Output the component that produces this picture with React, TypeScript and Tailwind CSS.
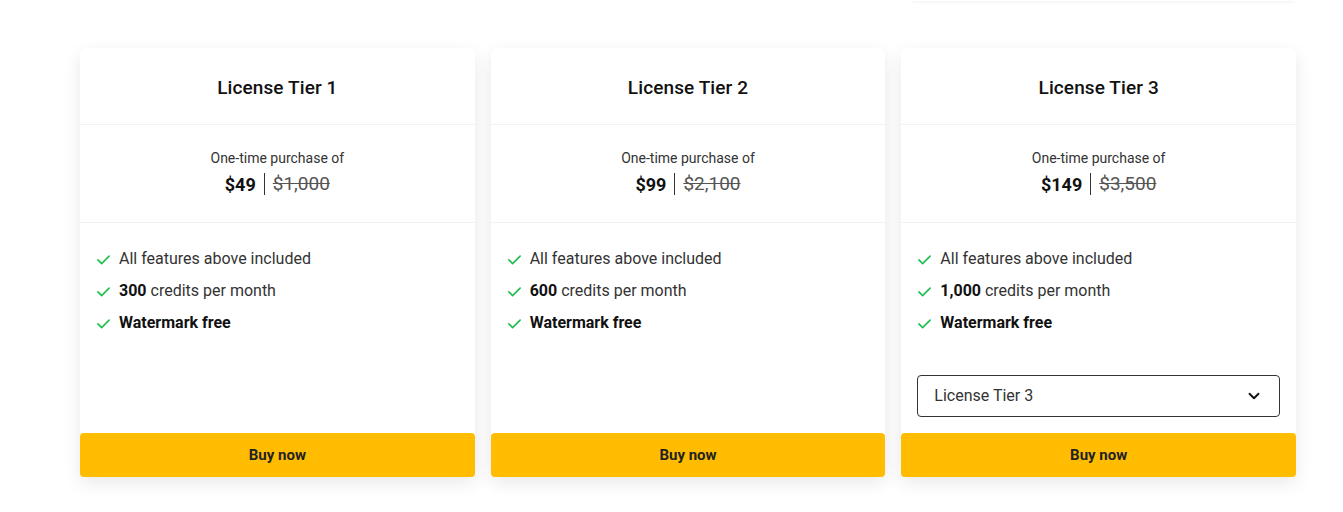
import { ChevronDown } from "lucide-react";

interface Tier {
  name: string;
  price: string;
  was: string;
  credits: string;
  select?: boolean;
}

const tiers: Tier[] = [
  { name: "License Tier 1", price: "$49", was: "$1,000", credits: "300" },
  { name: "License Tier 2", price: "$99", was: "$2,100", credits: "600" },
  { name: "License Tier 3", price: "$149", was: "$3,500", credits: "1,000", select: true },
];

const Check = () => (
  <svg width="15" height="15" viewBox="0 0 24 24" fill="none" stroke="#1fbf4f" strokeWidth="2.6" strokeLinecap="round" strokeLinejoin="round" className="shrink-0">
    <path d="M3 12.5l6 6L21 6.5" />
  </svg>
);

const TierCard = ({ tier }: { tier: Tier }) => (
  <div className="flex flex-col bg-white rounded-md shadow-[0_6px_18px_rgba(0,0,0,0.09)]">
    <div className="h-[77px] flex items-center justify-center border-b border-[#f2f2f2] pt-[4px]">
      <h3 className="text-[19px] font-medium text-[#111] tracking-[0.1px]">{tier.name}</h3>
    </div>
    <div className="h-[98px] flex flex-col items-center justify-center border-b border-[#f2f2f2]">
      <p className="text-[14px] text-[#333] leading-[19px]">One-time purchase of</p>
      <div className="flex items-center mt-[2px]">
        <span className="text-[18px] font-bold text-[#111]">{tier.price}</span>
        <span className="w-px h-[22px] bg-[#333] mx-[8px]" />
        <span className="text-[19px] text-[#555] line-through">{tier.was}</span>
      </div>
    </div>
    <div className="flex-1 flex flex-col px-[16px] pt-[25px] pb-[16px]">
      <ul className="flex flex-col gap-[10px] text-[16px] text-[#333]">
        <li className="flex items-center gap-[8px] h-[22px]">
          <Check />
          All features above included
        </li>
        <li className="flex items-center gap-[8px] h-[22px]">
          <Check />
          <span>
            <b className="font-bold text-[#111]">{tier.credits}</b> credits per month
          </span>
        </li>
        <li className="flex items-center gap-[8px] h-[22px]">
          <Check />
          <b className="font-bold text-[#111]">Watermark free</b>
        </li>
      </ul>
      {tier.select && (
        <div className="mt-[41px] h-[42px] border border-[#333] rounded-[4px] flex items-center justify-between pl-[16px] pr-[16px] text-[16px] text-[#333]">
          License Tier 3
          <ChevronDown size={18} strokeWidth={2.5} className="text-[#111]" />
        </div>
      )}
    </div>
    <button className="h-[44px] bg-[#ffbc00] rounded-[4px] text-[15px] font-bold text-[#222]">Buy now</button>
  </div>
);

export default function App() {
  return (
    <div className="min-h-[512px] bg-white font-['Roboto',sans-serif]">
      <div className="flex justify-end pr-[49px]">
        <div className="w-[382px] h-[1px] bg-white shadow-[0_1px_3px_rgba(0,0,0,0.12)]" />
      </div>
      <div className="grid grid-cols-3 gap-[16px] pl-[80px] pr-[47px] pt-[47px]">
        {tiers.map((t) => (
          <TierCard key={t.name} tier={t} />
        ))}
      </div>
    </div>
  );
}
